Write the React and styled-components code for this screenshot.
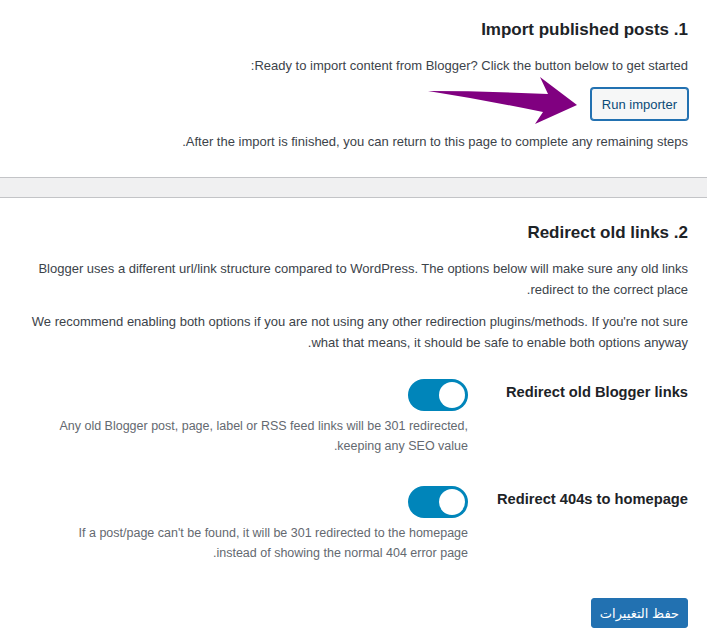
import React from 'react';
import styled, {createGlobalStyle} from 'styled-components';

const GlobalStyle = createGlobalStyle`
  html, body {
    margin: 0;
    padding: 0;
    background: #fff;
  }
  body {
    font-family: 'Liberation Sans', 'DejaVu Sans', sans-serif;
    font-size: 13px;
    color: #3c434a;
  }
`;

const Page = styled.div`
  direction: rtl;
  padding-bottom: 17px;
`;

const Section = styled.section`
  padding: ${p => p.top}px 19px 0;
`;

const Heading = styled.h2`
  font-family: 'Liberation Sans', Arial, sans-serif;
  font-size: 17px;
  font-weight: 700;
  line-height: 24px;
  color: #1d2327;
  margin: 0;
`;

const Text = styled.p`
  margin: ${p => p.gap}px 0 0;
  line-height: ${p => p.lh || 20}px;
  color: #3c434a;
`;

const ButtonRow = styled.div`
  position: relative;
  display: flex;
  margin-top: 12px;
`;

const SecondaryButton = styled.button`
  font-family: inherit;
  font-size: 13px;
  height: 32px;
  padding: 0 10px;
  color: #0a4b78;
  background: #f6f7f7;
  border: 1px solid #2271b1;
  border-radius: 3px;
  box-shadow: 0 0 0 1px #2271b1;
  cursor: pointer;
`;

const Arrow = styled.svg`
  position: absolute;
  top: -14px;
  right: 108px;
`;

const Band = styled.div`
  margin-top: 25px;
  height: 19px;
  background: #f0f0f1;
  border-top: 1px solid #c3c4c7;
  border-bottom: 1px solid #c3c4c7;
`;

const Options = styled.div`
  margin-top: 26px;
  display: flex;
  flex-direction: column;
  gap: 30px;
`;

const OptionRow = styled.div`
  display: grid;
  grid-template-columns: 200px 1fr;
  column-gap: 20px;
  align-items: start;
`;

const OptionLabel = styled.div`
  font-weight: 700;
  font-size: 14.7px;
  line-height: 20px;
  color: #1d2327;
  padding-top: 3px;
`;

const OptionBody = styled.div`
  display: flex;
  flex-direction: column;
  align-items: flex-start;
`;

const Toggle = styled.span`
  position: relative;
  display: block;
  width: 60px;
  height: 32px;
  border-radius: 16px;
  background: ${p => (p.on ? '#0085ba' : '#c3c4c7')};
  &:after {
    content: '';
    position: absolute;
    top: 3px;
    left: ${p => (p.on ? '31px' : '3px')};
    width: 26px;
    height: 26px;
    border-radius: 50%;
    background: #fff;
  }
`;

const Description = styled.p`
  margin: 5px 0 0;
  max-width: 420px;
  font-size: 12.5px;
  line-height: 20px;
  color: #646970;
`;

const Footer = styled.div`
  display: flex;
  margin-top: 35px;
`;

const PrimaryButton = styled.button`
  font-family: 'Liberation Sans', 'DejaVu Sans', sans-serif;
  font-size: 13px;
  height: 30px;
  padding: 0 8px;
  color: #fff;
  background: #2271b1;
  border: 1px solid #2271b1;
  border-radius: 3px;
  cursor: pointer;
`;

const options = [
  {
    label: 'Redirect old Blogger links',
    desc: 'Any old Blogger post, page, label or RSS feed links will be 301 redirected, keeping any SEO value.',
  },
  {
    label: 'Redirect 404s to homepage',
    desc: "If a post/page can't be found, it will be 301 redirected to the homepage instead of showing the normal 404 error page.",
  },
];

export default function App() {
  return (
    <Page>
      <GlobalStyle />
      <Section top={18}>
        <Heading>1. Import published posts</Heading>
        <Text gap={14}>Ready to import content from Blogger? Click the button below to get started:</Text>
        <ButtonRow>
          <SecondaryButton>Run importer</SecondaryButton>
          <Arrow width="155" height="53" viewBox="0 0 155 53">
            <path
              d="M3 17 Q60 17 123 20 L115 3 L152 31 L110 50 L118 38 Q60 26 3 17 Z"
              fill="#800080"
            />
          </Arrow>
        </ButtonRow>
        <Text gap={12}>After the import is finished, you can return to this page to complete any remaining steps.</Text>
      </Section>
      <Band />
      <Section top={23}>
        <Heading>2. Redirect old links</Heading>
        <Text gap={13} lh={21}>
          Blogger uses a different url/link structure compared to WordPress. The options below will make sure any old links redirect to the correct place.
        </Text>
        <Text gap={11} lh={21}>
          We recommend enabling both options if you are not using any other redirection plugins/methods. If you're not sure what that means, it should be safe to enable both options anyway.
        </Text>
        <Options>
          {options.map(o => (
            <OptionRow key={o.label}>
              <OptionLabel>{o.label}</OptionLabel>
              <OptionBody>
                <Toggle on />
                <Description>{o.desc}</Description>
              </OptionBody>
            </OptionRow>
          ))}
        </Options>
        <Footer>
          <PrimaryButton>حفظ التغييرات</PrimaryButton>
        </Footer>
      </Section>
    </Page>
  );
}
